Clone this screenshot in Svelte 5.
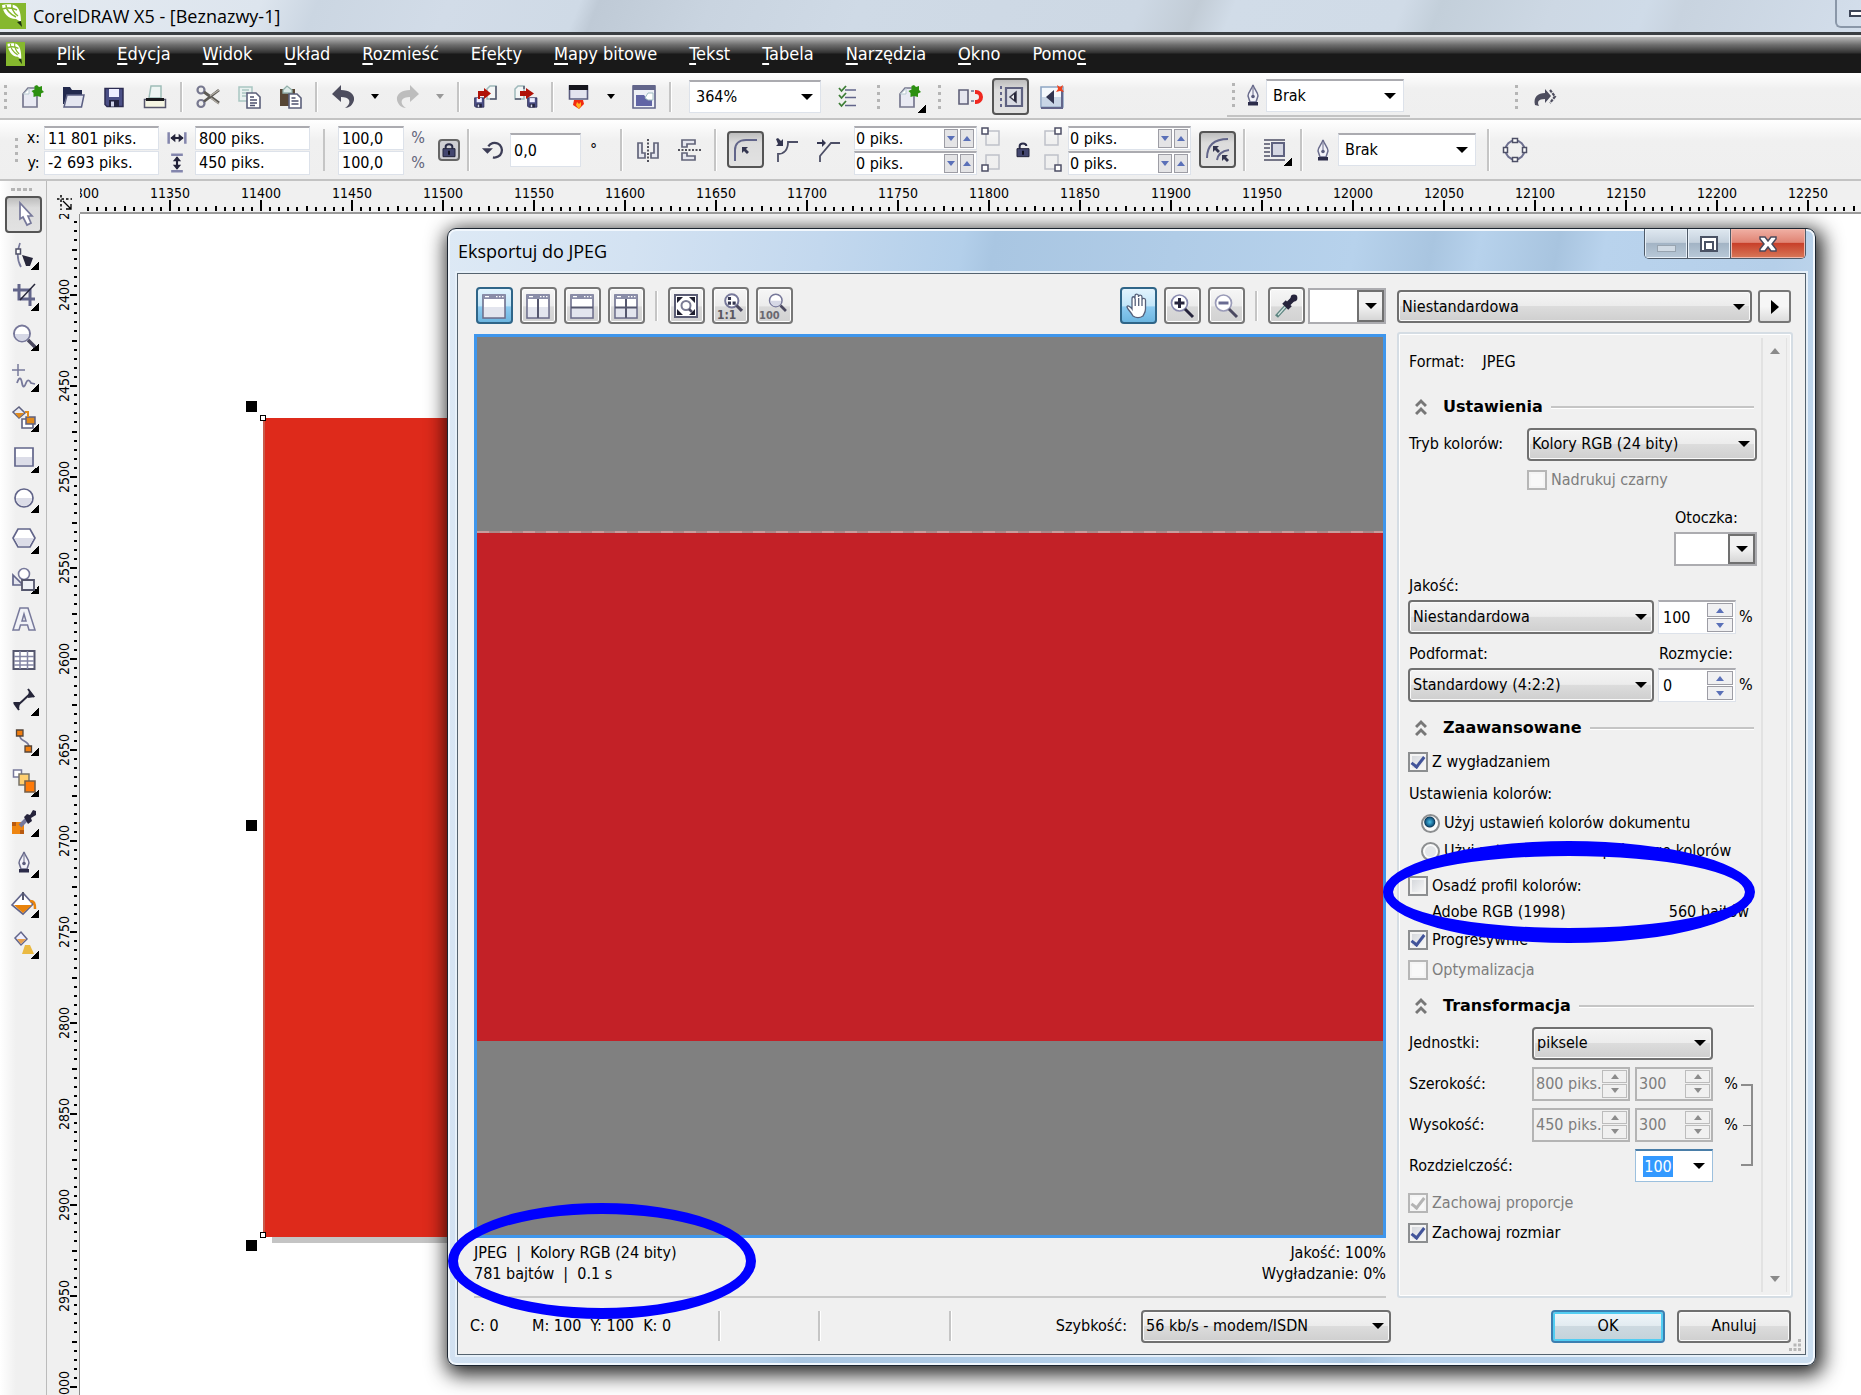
<script>
  const menu = [
    ['', 'P', 'lik'], ['', 'E', 'dycja'], ['', 'W', 'idok'], ['', 'U', 'kład'],
    ['', 'R', 'ozmieść'], ['Efe', 'k', 'ty'], ['', 'M', 'apy bitowe'], ['', 'T', 'ekst'],
    ['', 'T', 'abela'], ['', 'N', 'arzędzia'], ['', 'O', 'kno'], ['Pomo', 'c', '']
  ];

  const floppy = '<path fill="#4b4f86" stroke="#2c2c52" stroke-width="1.5" d="M3 3.5h18v18H5l-2-2z"/><path fill="#eef" d="M7 4h10v8H7z"/><path fill="#23233f" d="M7 15h10v7H7z"/><path fill="#cfd3ea" d="M9 16.500h3v5H9z"/>';
  const nib = '<path fill="#f2f2f8" stroke="#6a6c8c" stroke-width="1.5" d="M12 2c-1 4-5 7-5 11l2 6h6l2-6c0-4-4-7-5-11z"/><path stroke="#6a6c8c" d="M12 5v8"/><circle cx="12" cy="13.500" r="1.800" fill="#5a5c7c"/><path fill="#2c2c4a" d="M7 19h10v3.500H7z"/>';
  const lens = '<circle cx="10" cy="9.500" r="8" fill="#fff" stroke="#77789a" stroke-width="2"/><path fill="#d6d8e6" d="M3 10h14a7 7 0 0 1-14 0z"/><path stroke="#4b4960" stroke-width="3.500" d="M16 16l7 7"/>';
  const win = '<rect x="1" y="1" width="22" height="23" fill="#fff" stroke="#6d6f8d" stroke-width="1.600"/><path fill="#e3e5ee" d="M2 13h20v10H2z"/><path fill="#8a8da8" d="M1 0h22v5H1z"/><path stroke="#fff" stroke-width="1.200" d="M3 2.600h4M14 2.600h1.500M17 2.600h1.500M20 2.600h1.500"/>';
  const dropper = '<path stroke="#5d8580" stroke-width="4" d="M2.500 22.500L13 11"/><path stroke="#d5e6e2" stroke-width="1.200" d="M4 21L12 12"/><path stroke="#26243c" stroke-width="5" d="M10 8l6 6M14 10l6-6"/><circle cx="20" cy="4" r="3.400" fill="#26243c"/>';

  const icons = {
    new: '<path fill="#e9eaf3" stroke="#77788f" stroke-width="1.700" d="M3 9l5-6h9v19H3z"/><path fill="#fff" stroke="#b7c9d0" d="M3.500 9H9V3.500z"/><path fill="#2c9010" d="M17 0l2 2 3-1v4l2 2-3 1.500V12l-4-1-3.500 1V8l-2-2 3-1.500V1z"/>',
    open: '<path fill="#22294d" d="M2 2h7l2 3h10v6H6L3 19H2z"/><path fill="#e4e6f0" stroke="#5b5f82" stroke-width="1.500" d="M6 10h17l-2.500 12H3z"/>',
    save: floppy,
    print: '<path fill="#eef5f3" stroke="#9fbdb8" stroke-width="1.500" d="M8 1h10v12H6z"/><path fill="#f4f4e2" stroke="#55556b" stroke-width="1.500" d="M1.500 14.500h21v8h-21z"/><path fill="#18181c" d="M3 13h18v3H3z"/>',
    cut: '<circle cx="5" cy="5" r="3.500" fill="none" stroke="#77788f" stroke-width="2.200"/><circle cx="5" cy="18.500" r="3.500" fill="none" stroke="#77788f" stroke-width="2.200"/><path stroke="#5c5a55" stroke-width="2.800" d="M8 7l15 11M8 16.500L23 5"/><path stroke="#b5b0a8" stroke-width="1.200" d="M14 11l9-6M15 13l8 6"/>',
    copy: '<path fill="#e8f1ef" stroke="#a9c6c2" stroke-width="1.500" d="M2 2h13v14H2z"/><path stroke="#a9c6c2" stroke-width="1.500" d="M5 5h7M5 8h6M5 11h4"/><path fill="#fff" stroke="#5b5f7a" stroke-width="1.600" d="M10 8h9l4 4v11H10z"/><path stroke="#4c506e" stroke-width="1.500" d="M13 12h4M13 15h7M13 18h7M13 20.500h5"/>',
    paste: '<path fill="#574634" d="M2 4h15v17H2z"/><path fill="#dceae7" stroke="#93b0aa" stroke-width="1.300" d="M5 5l4-4 5 4v3H5z"/><path fill="#fff" stroke="#5b5f7a" stroke-width="1.600" d="M11 9h8l4 4v10H11z"/><path stroke="#4c506e" stroke-width="1.500" d="M13.500 13h4M13.500 16h7M13.500 19h7"/>',
    undo: '<path fill="#4d4d5e" d="M1 9L10 0v5c8 0 14 4 13 10-1 5-5 8-9 8 4-3 5-5 4-8-1-2-4-3-8-3v5z"/>',
    redo: '<path fill="#bdbdbd" d="M23 9L14 0v5C6 5 0 9 1 15c1 5 5 8 9 8-4-3-5-5-4-8 1-2 4-3 8-3v5z"/>',
    import: '<path fill="#f4f6f6" stroke="#9eb9bb" stroke-width="1.500" d="M14 4l3-3h6v13h-9z"/><path stroke="#55576e" stroke-width="1.500" d="M23 1v13h-6"/><g transform="translate(0 11) scale(.52)">' + floppy + '</g><path fill="#b01208" d="M5 6h6V3l7 5.500-7 5.500v-3H7v3H5z"/>',
    export: '<path fill="#f4f6f6" stroke="#9eb9bb" stroke-width="1.500" d="M1 4l3-3h6v13H1z"/><path stroke="#55576e" stroke-width="1.500" d="M10 1v3M1 14h6"/><g transform="translate(12 11) scale(.52)">' + floppy + '</g><path fill="#b01208" d="M6 6h6V3l8 5.500-8 5.500v-3H6z"/>',
    launch: '<path fill="#e3e4ef" stroke="#5b5d80" stroke-width="1.600" d="M2.500 1h18v13h-18z"/><path fill="#15151c" d="M2 0h19v5H2z"/><path fill="#f02a10" d="M7 15h9l1 4-5 5-6-4z"/><path fill="#ffb020" d="M10 17l2 2 2-2v4l-2.500 3L9 20z"/>',
    welcome: '<path fill="#eef0f6" stroke="#62658a" stroke-width="1.600" d="M1 1h22v22H1z"/><path fill="#62658a" d="M1 0h22v5H1z"/><path fill="#6165a5" d="M4 10h8l3 4h5v7H4z"/><path fill="#fff" stroke="#a0bcc2" d="M13 13l3-5h5v7h-5z"/>',
    list: '<path stroke="#62658a" stroke-width="1.600" d="M9 5h11M9 12.500h11M9 20.500h11"/><path fill="none" stroke="#3d7d35" stroke-width="1.800" d="M3 3l2.500 3L10 1M3 10l2.500 3L10 8M3 18l2.500 3L10 16"/>',
    snap: '<path fill="#e6e7f0" stroke="#5f6078" stroke-width="1.600" d="M1 5h9v14H1z"/><path fill="none" stroke="#f02820" stroke-width="4" d="M17 7h1a5 5 0 0 1 0 10h-1"/><path stroke="#8b93a8" stroke-width="3" stroke-dasharray="2" d="M14.500 5v4M14.500 15v4"/>',
    dockon: '<path stroke="#62658a" stroke-width="2" stroke-dasharray="3 3" d="M2 1v22"/><path fill="#d9dbe3" stroke="#5f6280" stroke-width="2.200" d="M7 3h16v18H7z"/><path fill="#e8e8ec" stroke="#38384a" stroke-width="1.500" d="M17 7v10l-6-5z"/><path fill="#26263a" d="M15 8h2v8h-2z"/>',
    dockoff: '<path fill="#f4f8fc" stroke="#8fa6c4" stroke-width="1.600" d="M1 2h22v20H1z"/><path fill="#c9d6e6" d="M2 12h20v9H2z"/><path stroke="#62658a" stroke-width="2" d="M22 6v17H1"/><path fill="#31344f" d="M14 5v14L6 12z"/><path fill="#f0421c" d="M17 0l3 2 3-2-1 4 2 3-4-1-4 1 2-3z"/>',
    nib,
    fwd: '<path fill="#4d4d5e" d="M13 4v4C6 8 1 12 3 20l4 1c-2-4-1-7 6-7v4l6-7z"/><path fill="none" stroke="#4d4d5e" stroke-width="2.200" stroke-dasharray="3 1" d="M18 5l5 6.500-5 6.500"/>',
    width: '<path stroke="#8486ad" stroke-width="3" d="M2 5v14M22 5v14"/><path stroke="#23233a" stroke-width="2.500" d="M5 12h14"/><path fill="#23233a" d="M4 12l6-5v10zM20 12l-6-5v10z"/>',
    height: '<path stroke="#8486ad" stroke-width="3" d="M5 2h14M5 22h14"/><path stroke="#23233a" stroke-width="2.500" d="M12 5v14"/><path fill="#23233a" d="M12 4l5 6H7zM12 20l5-6H7z"/>',
    lock: '<path fill="none" stroke="#2a2c48" stroke-width="3" d="M7 11V7c0-5 10-5 10 0v4"/><path fill="#43466f" stroke="#23243c" stroke-width="1.500" d="M3 10h18v12H3z"/><path fill="#0f0f1c" d="M10.500 13h3v6h-3z"/>',
    unlock: '<path fill="none" stroke="#2a2c48" stroke-width="3" d="M7 11V6c0-5 10-5 10 0"/><path fill="#43466f" stroke="#23243c" stroke-width="1.500" d="M3 10h18v12H3z"/><path fill="#0f0f1c" d="M10.500 13h3v6h-3z"/>',
    rotate: '<path fill="none" stroke="#3c3d56" stroke-width="2.500" d="M8 8a8 8 0 1 1 5 12"/><path fill="#3c3d56" d="M1 10h12l-6 6z"/>',
    mirh: '<path stroke="#1d1d2a" stroke-width="1.500" stroke-dasharray="2 1.500" d="M12 1v23"/><path fill="#e6e7ef" stroke="#62647a" stroke-width="1.700" d="M2 5h4v10h3v5H2zM22 5h-4v10h-3v5h7z"/>',
    mirv: '<path stroke="#1d1d2a" stroke-width="1.500" stroke-dasharray="2 1.500" d="M1 12h23"/><path fill="#e6e7ef" stroke="#62647a" stroke-width="1.700" d="M5 9V2h13v4h-8v3zM5 15v7h13v-4h-8v-3z"/>',
    round: '<path fill="none" stroke="#62658a" stroke-width="2" d="M1 23V12C1 6 5 2 12 2h11"/><path fill="#33354f" d="M8 9h6l-2 2 3 3-2 2-3-3-2 2z"/>',
    scallop: '<path fill="none" stroke="#4d4f66" stroke-width="1.800" d="M3 24v-8c6 0 10-4 10-12h10"/><path fill="#33354f" d="M1 1l2-1 3 3 2-2v7H1l2-2z"/>',
    chamfer: '<path fill="none" stroke="#4d4f66" stroke-width="1.800" d="M4 24v-6L15 5h9"/><path fill="#33354f" d="M1 4h5V1l4 4-4 4V6H1z"/>',
    rel: '<path fill="none" stroke="#62658a" stroke-width="2" d="M1 20C1 8 7 1 22 1M11 22c1-6 5-9 12-10"/><path fill="#33354f" d="M7 8h6l-2 2 3 3-2 2-3-3-2 2zM16 17h6l-2 2 3 3-2 2-3-3-2 2z"/>',
    wrap: '<path stroke="#4d4f66" stroke-width="1.700" d="M1 2h21M1 6h6M1 10h6M1 14h6M1 18h6M1 22h21"/><path fill="#d5d7e3" stroke="#5f6280" stroke-width="2" d="M9 5h12v13H9z"/>',
    curve: '<circle cx="12" cy="12" r="9.500" fill="none" stroke="#6e7090" stroke-width="2"/><g fill="#fff" stroke="#4d4f66" stroke-width="1.500"><path d="M9.500.500h5v4h-5zM9.500 19.500h5v4h-5zM.500 9.500h4v5h-4zM19.500 9.500h4v5h-4z"/></g>',
    pick: '<path fill="#fff" stroke="#77799b" stroke-width="1.700" d="M8 1v16l3-2 4 8 4-2-3-7h4z"/>',
    shape: '<path fill="none" stroke="#77799b" stroke-width="1.700" d="M8 0C5 8 5 17 9 24"/><path fill="#fff" stroke="#4d4f66" stroke-width="1.500" d="M4 6h4.500v5H4z"/><path fill="#26263a" d="M10 12l11 3-3 8h-4z"/>',
    crop: '<path fill="none" stroke="#62658a" stroke-width="3" d="M1 7h17v16M7 1v15h16"/><path stroke="#26263a" stroke-width="1.500" d="M8 17L23 1"/>',
    zoom: lens,
    free: '<path stroke="#77799b" stroke-width="1.500" d="M0 6h13M6 0v12"/><path fill="none" stroke="#77799b" stroke-width="1.800" d="M5 19c2-6 4-6 5 0s3 3 4 0 3-4 5 0l4 1"/>',
    smart: '<path fill="#e9eaf2" stroke="#5f6280" stroke-width="1.500" d="M1 7l6-5 6 6-6 5z"/><path fill="#e08a1c" d="M3 8h9l-5 5z"/><path fill="#fff" stroke="#5f6280" stroke-width="1.600" d="M10 14h11v9H10z"/><path fill="#e08a1c" stroke="#5f6280" stroke-width="1.500" d="M14 12h9v7h-9z"/><path stroke="#e08a1c" stroke-width="2" d="M13 7h3v5"/>',
    rect: '<path fill="#fff" stroke="#62658a" stroke-width="1.700" d="M3 3h18v18H3z"/><path fill="#dcdde8" d="M4 12h16v8H4z"/>',
    ell: '<circle cx="12" cy="12" r="9" fill="#fff" stroke="#62658a" stroke-width="1.700"/><path fill="#dcdde8" d="M4 12h16a8 8 0 0 1-16 0z"/>',
    poly: '<path fill="#fff" stroke="#62658a" stroke-width="1.700" d="M6 3h12l5 9-5 9H6l-5-9z"/><path fill="#dcdde8" d="M2 12h20l-5 8H7z"/>',
    shapes: '<path fill="#e4e5ee" stroke="#62658a" stroke-width="1.700" d="M1 8l10 10H1z"/><circle cx="12" cy="7" r="5.500" fill="#fff" stroke="#77799b" stroke-width="1.600"/><path fill="#eef0f6" stroke="#55576e" stroke-width="1.800" d="M10 13h12v10H10z"/>',
    text: '<path fill="#f1f2f7" stroke="#77799b" stroke-width="1.500" fill-rule="evenodd" d="M8 1h8l7 22h-6l-1.500-5h-7L7 23H1zM12 7l-2 7h4z"/>',
    table: '<path fill="#fff" stroke="#55576e" stroke-width="2" d="M1.500 3h21v18h-21z"/><path stroke="#8486a5" stroke-width="1.500" d="M8 3v18M15.500 3v18M2 8.500h20M2 13h20M2 17h20"/>',
    dim: '<path stroke="#26263a" stroke-width="2" d="M5 18L19 5"/><path fill="#26263a" d="M1 14l6 7 1-7zM23 9l-6-7-1 8z"/><path stroke="#26263a" stroke-width="2" d="M2 15l5 7M16 1l6 8"/>',
    conn: '<path fill="none" stroke="#77799b" stroke-width="1.700" d="M8 7c0 6 9 4 9 11"/><path fill="#ef7d10" stroke="#55453a" stroke-width="1.300" d="M4.500 1h6.500v6H4.500zM13 17h6.500v6H13z"/>',
    blend: '<path fill="#fff" stroke="#77799b" stroke-width="1.500" d="M1.500 1h8v7h-8z"/><path fill="#ffcf70" stroke="#77736a" stroke-width="1.500" d="M7 5h10v11H7z"/><path fill="#ff7a08" stroke="#77604a" stroke-width="1.600" d="M13 12h10v11H13z"/>',
    eye: '<path fill="#ee8510" d="M0 12h12v12H0z"/><path fill="#b85a10" d="M0 12h4v4H0zM8 20h4v4H8z"/><path stroke="#77799b" stroke-width="4" d="M8 16l8-8"/><path fill="#26243c" d="M12 7l3-3 3 1 3-5 3 1v4l-5 3 1 3-4 3z"/>',
    fill: '<path fill="#fff" stroke="#62658a" stroke-width="1.700" d="M0 14L11 2l10 11-10 10z"/><path fill="#e8830c" d="M2 14h18l-9 8z"/><path stroke="#55576e" stroke-width="2" d="M11 1v8"/><path fill="none" stroke="#e8830c" stroke-width="2.500" d="M18 10c4 0 5 2 5 8"/>',
    ifill: '<path fill="#eef" stroke="#62658a" stroke-width="1.500" d="M3 7l6-6 6 7-6 6z"/><path fill="#e8a04c" d="M5 8h9l-5 5z"/><path fill="#eab942" d="M13 14h5l4 9H10z"/>',
    w1: win,
    w2: win + '<path stroke="#55576e" stroke-width="2" d="M12 5v19"/>',
    w3: win + '<path stroke="#55576e" stroke-width="2" d="M1 13.500h22"/>',
    w4: win + '<path stroke="#55576e" stroke-width="2" d="M12 5v19M1 13.500h22"/>',
    fit: '<path fill="#fff" stroke="#5a5c74" stroke-width="2" d="M1 1h22v22H1z"/><path fill="#1f1f30" d="M3 3h6L3 9zM21 3h-6l6 6zM3 21h6l-6-6zM21 21h-6l6-6z"/><circle cx="12" cy="11.500" r="4.500" fill="#fff" stroke="#7a7c94" stroke-width="2"/><path stroke="#4b4960" stroke-width="2.500" d="M15 15l3 3"/>',
    one: '<g transform="translate(6 -1) scale(.78)"><circle cx="10" cy="10" r="8.500" fill="#fff" stroke="#77789a" stroke-width="2.500"/><path stroke="#4b4960" stroke-width="4" d="M16 16l7 7"/><path fill="#33354f" d="M5 5h4v4H5zM11 11h4v4h-4zM5 11h4v4H5z"/></g><text x="-1" y="25" font-size="12" font-weight="700" fill="#5a5860">1:1</text>',
    hund: '<g transform="translate(6 -1) scale(.78)">' + lens + '</g><text x="-3" y="25" font-size="11" font-weight="700" fill="#6a6870">100</text>',
    hand: '<path fill="#fff" stroke="#55607a" stroke-width="1.300" d="M7 22c-2-4-5-6-6-9 0-2 3-1 5 2V5c0-3 3-3 3 0V2c0-2.500 3.500-2.500 3.500 0v1c0-2.500 3.500-2.500 3.500 0v3c0-2.500 3.500-2 3.500 0v9c0 4-2 5-2.500 7-3 2-7 2-10 0z"/><path stroke="#55607a" stroke-width="1.300" d="M9.200 5v7M12.700 4v8M16 6v6"/>',
    zin: '<circle cx="9.500" cy="9" r="8" fill="#fff" stroke="#8a8bb0" stroke-width="1.700"/><path stroke="#26243c" stroke-width="3" d="M4.500 9h10M9.500 4v10M15 15l8 8"/>',
    zout: '<circle cx="9.500" cy="9" r="8" fill="#fff" stroke="#9a9bb8" stroke-width="1.700"/><path stroke="#6a6c92" stroke-width="3" d="M4.500 9h10"/><path stroke="#4b4960" stroke-width="3" d="M15 15l8 8"/>',
    dropper
  };

  const tools = [
    ['pick', 'Wskaźnik', 0], ['shape', 'Kształt', 1], ['crop', 'Kadrowanie', 1], ['zoom', 'Lupa', 1],
    ['free', 'Krzywa od ręki', 1], ['smart', 'Inteligentne wypełnienie', 1], ['rect', 'Prostokąt', 1],
    ['ell', 'Elipsa', 1], ['poly', 'Wielokąt', 1], ['shapes', 'Kształty podstawowe', 1], ['text', 'Tekst', 0],
    ['table', 'Tabela', 0], ['dim', 'Wymiar', 1], ['conn', 'Łącznik', 1], ['blend', 'Metamorfoza', 1],
    ['eye', 'Kroplomierz', 1], ['nib', 'Kontur', 1], ['fill', 'Wypełnienie', 1], ['ifill', 'Wypełnienie interakcyjne', 1]
  ];

  const step = 91;
  const hMarks = Array.from({ length: 21 }, (_, i) => ({ at: i * step - 1, label: 11300 + i * 50 }));
  const vMarks = Array.from({ length: 14 }, (_, i) => ({ at: (i - 1) * step + 81, label: 2350 + i * 50 }));
  const minor = [1, 2, 3, 4, 5, 6, 7, 8, 9];
</script>

{#snippet icon(name, size = 24)}
  <svg class="ico" width={size} height={size} viewBox="0 0 24 24" fill="none" aria-hidden="true">{@html icons[name]}</svg>
{/snippet}

{#snippet tool(name, label, cls = '')}
  <button type="button" class="tb {cls}" aria-label={label}><span class="face">{@render icon(name)}</span></button>
{/snippet}

{#snippet logo()}
  <svg class="logo" viewBox="0 0 26 26" preserveAspectRatio="none" aria-hidden="true">
    <path fill="#86b82e" d="M0 0h26v26H0z" />
    <path fill="#fff" d="M2 2c5-1 11-1 14 1 4 3 5 9 5 16l-5-3c-8 0-13-6-14-14z" />
    <path stroke="#86b82e" stroke-width="1.500" fill="none" d="M6 2c0 5 4 9 10 12M12 1c-1 5 2 9 6 12M2 6c4-1 9-2 15 1" />
    <path fill="#1c3010" d="M17 19l4-1 1 6z" />
  </svg>
{/snippet}

{#snippet sel(label, value, cls = '')}
  <span class="sel {cls}"><select aria-label={label}><option>{value}</option></select></span>
{/snippet}

{#snippet spin(label, value, cls = '', disabled = false)}
  <span class="spin {cls}" class:off={disabled}>
    <input type="text" aria-label={label} {value} {disabled} />
    <span class="arrows">
      <button type="button" class="up" aria-label="{label}: więcej" {disabled}></button>
      <button type="button" class="down" aria-label="{label}: mniej" {disabled}></button>
    </span>
  </span>
{/snippet}

{#snippet heading(title)}
  <h2>
    <svg width="12" height="18" viewBox="0 0 12 18" fill="none" aria-hidden="true"><path stroke="#777" stroke-width="3" d="M1 8l5-5 5 5M1 16l5-5 5 5" /></svg>
    <span>{title}</span>
  </h2>
{/snippet}

<div class="app">
  <header class="title">
    {@render logo()}
    <h1>CorelDRAW X5 - [Beznazwy-1]</h1>
    <button type="button" class="appmin" aria-label="Minimalizuj"><i></i></button>
  </header>

  <nav class="menu">
    {@render logo()}
    {#each menu as [a, u, b]}
      <a href="#menu">{a}<u>{u}</u>{b}</a>
    {/each}
  </nav>

  <div class="bar main">
    <div class="dock">
      <i class="grip first"></i>
      {@render tool('new', 'Nowy')}{@render tool('open', 'Otwórz')}{@render tool('save', 'Zapisz')}{@render tool('print', 'Drukuj')}
      <i class="sep"></i>
      {@render tool('cut', 'Wytnij')}{@render tool('copy', 'Kopiuj')}{@render tool('paste', 'Wklej')}
      <i class="sep"></i>
      {@render tool('undo', 'Cofnij')}<button type="button" class="more" aria-label="Lista cofania"></button>
      {@render tool('redo', 'Ponów')}<button type="button" class="more dim" aria-label="Lista ponawiania"></button>
      <i class="sep"></i>
      {@render tool('import', 'Importuj')}{@render tool('export', 'Eksportuj')}
      <i class="sep"></i>
      {@render tool('launch', 'Uruchamianie aplikacji')}<button type="button" class="more" aria-label="Lista aplikacji"></button>
      {@render tool('welcome', 'Ekran powitalny')}
      <i class="sep"></i>
      {@render sel('Powiększenie', '364%', 'flat zoomsel')}
      {@render tool('list', 'Opcje', 'gaps')}
      <i class="grip"></i>
      {@render tool('new', 'Nowy dokument', 'fly')}
      <i class="grip"></i>
      {@render tool('snap', 'Przyciągaj')}{@render tool('dockon', 'Okna dokowane', 'on')}{@render tool('dockoff', 'Zamknij okna')}
    </div>
    <div class="dock pen">
      <i class="grip first"></i>
      <span class="cell w26">{@render icon('nib')}</span>
      {@render sel('Kontur', 'Brak', 'flat pensel')}
    </div>
    <div class="dock">
      <i class="grip first"></i>
      {@render tool('fwd', 'Dalej')}
    </div>
  </div>

  <div class="bar prop">
    <i class="grip first"></i>
    <div class="stack labels"><label for="px">x:</label><label for="py">y:</label></div>
    <div class="stack w115"><input id="px" type="text" value="11 801 piks." /><input id="py" type="text" value="-2 693 piks." /></div>
    <div class="stack icons w36">{@render icon('width', 20)}{@render icon('height', 20)}</div>
    <div class="stack w115"><input aria-label="Szerokość obiektu" type="text" value="800 piks." /><input aria-label="Wysokość obiektu" type="text" value="450 piks." /></div>
    <i class="sep wide"></i>
    <div class="stack w66"><input aria-label="Skala X" type="text" value="100,0" /><input aria-label="Skala Y" type="text" value="100,0" /></div>
    <div class="stack labels pct"><span>%</span><span>%</span></div>
    <button type="button" class="lock" aria-label="Blokada proporcji">{@render icon('lock', 16)}</button>
    <i class="sep"></i>
    <span class="cell w36">{@render icon('rotate', 22)}</span>
    <input class="angle" aria-label="Kąt obrotu" type="text" value="0,0" />
    <span class="deg">°</span>
    <i class="sep"></i>
    {@render tool('mirh', 'Odbicie poziome')}{@render tool('mirv', 'Odbicie pionowe')}
    <i class="sep"></i>
    {@render tool('round', 'Zaokrąglony narożnik', 'on gap2')}{@render tool('scallop', 'Wklęsły narożnik')}{@render tool('chamfer', 'Ścięty narożnik')}
    <div class="stack w123 gaps">{@render spin('Narożnik lewy górny', '0 piks.', 'side')}{@render spin('Narożnik lewy dolny', '0 piks.', 'side')}</div>
    <svg class="corners" width="30" height="48" viewBox="0 0 30 48" fill="none" aria-hidden="true">
      <path stroke="#bfc1c9" stroke-width="1.500" d="M9 5h13v14H9zM9 29h13v14H9z" /><path fill="#fff" stroke="#4d4f66" stroke-width="1.500" d="M5 2h6v6H5zM5 39h6v6H5z" />
    </svg>
    <span class="cell w31">{@render icon('unlock', 16)}</span>
    <svg class="corners" width="30" height="48" viewBox="0 0 30 48" fill="none" aria-hidden="true">
      <path stroke="#bfc1c9" stroke-width="1.500" d="M7 5h13v14H7zM7 29h13v14H7z" /><path fill="#fff" stroke="#4d4f66" stroke-width="1.500" d="M17 2h6v6h-6zM17 39h6v6h-6z" />
    </svg>
    <div class="stack w123">{@render spin('Narożnik prawy górny', '0 piks.', 'side')}{@render spin('Narożnik prawy dolny', '0 piks.', 'side')}</div>
    {@render tool('rel', 'Względne skalowanie', 'on gaps')}
    <i class="sep"></i>
    {@render tool('wrap', 'Oblewanie tekstem', 'fly gap2')}
    <i class="sep"></i>
    <span class="cell w31">{@render icon('nib')}</span>
    {@render sel('Grubość konturu', 'Brak', 'flat pensel')}
    <i class="sep gaps"></i>
    {@render tool('curve', 'Konwertuj na krzywe')}
  </div>

  <div class="work">
    <aside class="tools">
      <i class="hgrip"></i>
      {#each tools as [name, label, fly], i}
        {@render tool(name, label, (fly ? 'fly ' : '') + (i === 0 ? 'on' : ''))}
      {/each}
    </aside>

    <div class="origin">
      <svg width="15" height="15" viewBox="0 0 15 15" fill="none" aria-hidden="true"><path stroke="#000" stroke-width="1.500" stroke-dasharray="2.500 2" d="M0 4h15M4 0v15" /><path stroke="#000" stroke-width="1.300" d="M6 6l8 8M14 9v5H9" /></svg>
    </div>
    <svg class="hruler" aria-hidden="true">
      {#each hMarks as m}
        <text x={m.at} y="17" text-anchor="middle">{m.label}</text>
        <path d="M{m.at} 19v11" />
        {#each minor as k}<path d="M{Math.round(m.at + k * step / 10)} {k === 5 ? 25 : 26}v{k === 5 ? 5 : 4}" />{/each}
      {/each}
    </svg>
    <svg class="vruler" aria-hidden="true">
      {#each vMarks as m}
        <text transform="rotate(-90 21 {m.at})" x="21" y={m.at + 1} text-anchor="middle">{m.label}</text>
        <path d="M23 {m.at}h7" />
        {#each minor as k}<path d="M{k === 5 ? 25 : 27} {Math.round(m.at + k * step / 10)}h{k === 5 ? 5 : 3}" />{/each}
      {/each}
    </svg>

    <main class="canvas">
      <div class="obj"></div>
      <i class="handle h1"></i><i class="handle h2"></i><i class="handle h3"></i>
      <i class="node n1"></i><i class="node n2"></i>

      <section class="dialog" role="dialog" aria-label="Eksportuj do JPEG">
        <header>
          <h1>Eksportuj do JPEG</h1>
          <div class="winbtns">
            <button type="button" aria-label="Minimalizuj" disabled><i class="min"></i></button>
            <button type="button" aria-label="Maksymalizuj"><i class="max"></i></button>
            <button type="button" class="close" aria-label="Zamknij"><svg width="18" height="16" viewBox="0 0 18 16" aria-hidden="true"><path fill="#fff" stroke="#4a4a5c" stroke-width="1.500" d="M1 1h5l3 4 3-4h5v2l-4 5 4 5v2h-5l-3-4-3 4H1v-2l4-5-4-5z" /></svg></button>
          </div>
        </header>

        <div class="client">
          <div class="strip">
            {@render tool('w1', 'Pełny podgląd', 'raised lit')}{@render tool('w2', 'Dwa podglądy w pionie', 'raised')}{@render tool('w3', 'Dwa podglądy w poziomie', 'raised')}{@render tool('w4', 'Cztery podglądy', 'raised')}
            <i class="sep"></i>
            {@render tool('fit', 'Dopasuj', 'raised')}{@render tool('one', 'Powiększenie 1:1', 'raised')}{@render tool('hund', 'Powiększenie 100%', 'raised')}
            <span class="grow"></span>
            {@render tool('hand', 'Przesuwanie', 'raised lit')}{@render tool('zin', 'Powiększ', 'raised')}{@render tool('zout', 'Pomniejsz', 'raised')}
            <i class="sep"></i>
            {@render tool('dropper', 'Kroplomierz', 'raised')}
            <button type="button" class="swatch" aria-label="Kolor"><i></i></button>
          </div>
          <div class="preset">
            {@render sel('Lista ustawień', 'Niestandardowa', 'grow')}
            <button type="button" class="play" aria-label="Menu ustawień"><i></i></button>
          </div>

          <div class="left">
            <div class="preview"><div class="picture"></div></div>
            <div class="status">
              <p>JPEG&nbsp; |&nbsp; Kolory RGB (24 bity)<br />781 bajtów&nbsp; |&nbsp; 0.1 s</p>
              <p class="r">Jakość: 100%<br />Wygładzanie: 0%</p>
            </div>
          </div>

          <div class="panel">
            <form class="form">
              <div class="row format"><span>Format:</span><span>JPEG</span></div>
              {@render heading('Ustawienia')}
              <div class="row h40"><span class="grow">Tryb kolorów:</span>{@render sel('Tryb kolorów', 'Kolory RGB (24 bity)', 'w230')}</div>
              <label class="row h32 black"><input type="checkbox" disabled />Nadrukuj czarny</label>
              <div class="field halo"><label for="halo">Otoczka:</label><button type="button" id="halo" class="swatch" aria-label="Kolor otoczki"><i></i></button></div>
              <div class="pairs">
                <div class="field"><span>Jakość:</span>{@render sel('Jakość', 'Niestandardowa')}</div>
                <div class="field"><span></span><div class="unit">{@render spin('Jakość w procentach', '100')}<span>%</span></div></div>
                <div class="field"><span>Podformat:</span>{@render sel('Podformat', 'Standardowy (4:2:2)')}</div>
                <div class="field"><span>Rozmycie:</span><div class="unit">{@render spin('Rozmycie', '0')}<span>%</span></div></div>
              </div>
              {@render heading('Zaawansowane')}
              <label class="row h34"><input type="checkbox" checked />Z wygładzaniem</label>
              <div class="row h30 ind2">Ustawienia kolorów:</div>
              <label class="row h28 ind"><input type="radio" name="colors" checked />Użyj ustawień kolorów dokumentu</label>
              <label class="row h28 ind"><input type="radio" name="colors" />Użyj ustawień obrazu próbnego kolorów</label>
              <label class="row h30 embed"><input type="checkbox" />Osadź profil kolorów:</label>
              <div class="row profile"><span class="grow">Adobe RGB (1998)</span><span>560 bajtów</span></div>
              <label class="row h30"><input type="checkbox" checked />Progresywnie</label>
              <label class="row h30 dis last"><input type="checkbox" disabled />Optymalizacja</label>
              {@render heading('Transformacja')}
              <div class="row h40"><span class="lab">Jednostki:</span>{@render sel('Jednostki', 'piksele', 'w181')}</div>
              <div class="sizes">
                <div class="dims">
                  <span>Szerokość:</span>{@render spin('Szerokość', '800 piks.', '', true)}{@render spin('Szerokość w procentach', '300', '', true)}<span class="end">%</span>
                  <span>Wysokość:</span>{@render spin('Wysokość', '450 piks.', '', true)}{@render spin('Wysokość w procentach', '300', '', true)}<span class="end">%</span>
                  <span class="two">Rozdzielczość:</span><span class="res"><input type="text" aria-label="Rozdzielczość" value="100" size="3" /></span>
                </div>
                <i class="bracket"></i>
              </div>
              <label class="row h30 keep dis"><input type="checkbox" checked disabled />Zachowaj proporcje</label>
              <label class="row h30"><input type="checkbox" checked />Zachowaj rozmiar</label>
            </form>
            <div class="scroll"><i class="tri up"></i><i class="tri down"></i></div>
          </div>

          <footer>
            <span class="c">C: 0</span><span class="m">M: 100&nbsp; Y: 100&nbsp; K: 0</span>
            <i class="sep"></i><span class="f1"></span><i class="sep"></i><span class="f2"></span><i class="sep"></i>
            <span class="grow"></span>
            <label for="speed">Szybkość:</label>
            <span class="sel w250"><select id="speed"><option>56 kb/s - modem/ISDN</option></select></span>
            <div class="actions"><button type="button" class="push ok">OK</button><button type="button" class="push">Anuluj</button></div>
            <svg class="size" width="12" height="12" viewBox="0 0 12 12" aria-hidden="true"><path fill="#b8b8b8" d="M9 0h3v3H9zM4.500 4.500h3v3h-3zM9 4.500h3v3H9zM0 9h3v3H0zM4.500 9h3v3h-3zM9 9h3v3H9z" /></svg>
          </footer>
        </div>
        <svg class="ring ring1" viewBox="0 0 308 116" preserveAspectRatio="none" aria-hidden="true"><path fill="#00f" fill-rule="evenodd" d="M0 58a154 58 0 0 1 308 0a154 58 0 0 1-308 0zM10 58a144 47 0 0 0 288 0a144 47 0 0 0-288 0z" /></svg>
        <svg class="ring ring2" viewBox="0 0 373 103" preserveAspectRatio="none" aria-hidden="true"><path fill="#00f" fill-rule="evenodd" d="M0 51a186 51 0 0 1 372 0a186 51 0 0 1-372 0zM10 51a176 36 0 0 0 352 0a176 36 0 0 0-352 0z" /></svg>
      </section>
    </main>
  </div>
</div>

<style>
  :global(body) { margin: 0; }
  * { box-sizing: border-box; }
  .app { height: 100vh; display: flex; flex-direction: column; overflow: hidden; background: #fff; color: #000; font: 16px/20px "DejaVu Sans Condensed", "Noto Sans", sans-serif; }
  button, input, select { font: inherit; color: inherit; margin: 0; padding: 0; border: 0; background: none; border-radius: 0; outline: 0; min-width: 0; }
  h1, h2, p { margin: 0; font-weight: 400; }
  i { display: block; font-style: normal; flex: none; }
  svg { display: block; flex: none; }
  .ico { overflow: visible; }
  .grow { flex: 1; }

  .title { height: 35px; flex: none; display: flex; align-items: center; gap: 7px; border-bottom: 3px solid #3a3e42; background: linear-gradient(112deg, #e4eaf1 0, #dde5ee 14%, #cbd6e2 17%, #d2dce8 24%, #cfdae6 31%, #bfcad6 32%, #c9d4e0 38%, #cfdae6 46%, #cdd8e4 61%, #c2ccd6 64%, #d1dce8 66%, #d0dbe7 75%, #c3cfda 77%, #cdd8e4 83%, #cfdbe8 88%, #c8d3df 90%, #d3deeb 100%); }
  .title h1, .dialog h1 { font: 18px/24px "Open Sans", "Noto Sans", sans-serif; flex: 1; }
  .logo { width: 26px; height: 26px; }
  .appmin { align-self: flex-start; width: 26px; height: 28px; border: 2px solid #8a97a8; border-width: 0 0 2px 2px; border-bottom-left-radius: 6px; display: grid; place-items: center end; }
  .appmin i { width: 12px; height: 7px; border: 2px solid #3e4658; border-right: 0; background: #fff; }

  .menu { height: 38px; flex: none; display: flex; align-items: center; gap: 32px; padding: 0 6px 2px; color: #fff; font-size: 18px; line-height: 24px; border-top: 2px solid #e8e8e8; background: linear-gradient(#b8b8b8, #9c9c9c 3px, #6c6c6c 8px, #484848 13px, #303030 16px, #191919 17px); }
  .menu .logo { width: 19px; height: 24px; }
  .menu a { color: #fff; text-decoration: none; white-space: nowrap; }
  .menu u { text-underline-offset: 3px; text-decoration-thickness: 2px; }

  .bar { flex: none; display: flex; align-items: center; background: linear-gradient(#fff, #f0f0f0 35%, #efefef); border-bottom: 2px solid #c3c3c3; }
  .main { height: 47px; display: grid; grid-template-columns: 1227fr 283fr 351fr; align-items: stretch; }
  .dock { display: flex; align-items: center; min-width: 0; padding-top: 2px; }
  .pen { justify-self: start; align-self: start; height: 44px; border-bottom: 2px solid #c3c3c3; padding-right: 6px; }
  .prop { height: 61px; padding-left: 10px; }
  .grip { width: 20px; height: 28px; background: radial-gradient(circle at 50% 50%, #b5b5b5 0 2px, transparent 2px) center top / 5px 7px repeat-y; }
  .grip.first { width: 13px; }
  .main .dock:first-child > .first { width: 11px; }
  .sep { width: 12px; height: 30px; background: linear-gradient(90deg, transparent 5px, #c5c5c5 5px 7px, #fff 7px 8px, transparent 8px); }
  .prop .sep { height: 42px; }
  .sep.wide { width: 28px; background: linear-gradient(90deg, transparent 13px, #c5c5c5 13px 15px, transparent 15px); }
  .tb { width: 41px; height: 37px; flex: none; display: flex; justify-content: center; align-items: center; }
  .face { width: 37px; height: 37px; display: flex; justify-content: center; align-items: center; border-radius: 4px; }
  .on .face { border: 2px solid #555; background: linear-gradient(#bdbdbd, #dcdcdc 30%, #e2e2e2); }
  .fly .face { background: linear-gradient(135deg, transparent 50%, #000 50%) right 1px bottom 2px / 8px 8px no-repeat; }
  .more { width: 24px; height: 30px; flex: none; display: grid; place-items: center; }
  .more::after { content: ""; border: 4px solid transparent; border-top: 5px solid #000; border-bottom: 0; }
  .more.dim::after { border-top-color: #999; }
  .gaps { margin-left: 6px; }
  .gap2 { margin-left: 4px; }
  .cell { display: grid; place-items: center; flex: none; }
  .w26 { width: 26px; }
  .w31 { width: 31px; }
  .w36 { width: 36px; }
  .stack { flex: none; display: grid; grid-auto-rows: 24px; row-gap: 1px; align-items: stretch; padding-top: 2px; }
  .stack input, .angle { border: 1px solid #dde2ea; border-top: 2px solid #ababb0; background: #fff; width: 100%; padding-left: 3px; }
  .stack > input:last-child { border-top: 1px solid #dde2ea; }
  .labels { width: 21px; text-align: center; line-height: 24px; }
  .pct { width: 28px; color: #62647a; }
  .icons { justify-items: center; align-items: center; }
  .w115 { width: 115px; }
  .w66 { width: 66px; }
  .w123 { width: 123px; }
  .lock { width: 22px; height: 22px; margin: 0 2px 0 6px; border: 2px solid #666; border-radius: 4px; background: #cfcfd3; display: grid; place-items: center; flex: none; }
  .angle { width: 71px; height: 34px; flex: none; }
  .deg { width: 34px; padding-left: 9px; flex: none; }

  .sel { display: grid; height: 33px; align-items: center; flex: none; border: 2px solid #707070; border-radius: 4px; background: linear-gradient(#f4f4f4, #ececec 48%, #dcdcdc 50%, #cfcfcf); box-shadow: inset 0 0 0 1px #fafafa; }
  .sel select, .sel::after { grid-area: 1 / 1; }
  .sel select { appearance: none; width: 100%; height: 100%; padding: 0 24px 0 3px; }
  .sel::after { content: ""; justify-self: end; margin-right: 5px; border: 6px solid transparent; border-top: 6px solid #000; border-bottom: 0; pointer-events: none; }
  .sel.grow { flex: 1; }
  .sel.flat { border: 1px solid #dde2ea; border-top: 2px solid #ababb0; border-radius: 0; background: #fff; box-shadow: none; }
  .flat select { padding-left: 6px; }
  .flat::after { margin-right: 7px; }
  .zoomsel { width: 132px; margin-left: 13px; }
  .pensel { width: 138px; }
  .w230 { width: 230px; }
  .w181 { width: 181px; }
  .w250 { width: 250px; }

  .spin { display: flex; height: 34px; background: #fff; border: 1px solid #dde2ea; border-top: 2px solid #ababb0; padding: 1px 2px 1px 0; min-width: 0; }
  .spin input, .stack .spin input { flex: 1; width: 0; border: 0; background: none; padding-left: 4px; }
  .stack .spin input { padding-left: 1px; }
  .arrows { width: 26px; display: flex; flex-direction: column; gap: 1px; flex: none; }
  .arrows button { flex: 1; border: 1px solid #9d9da5; background: #f0f0f2; display: grid; place-items: center; }
  .arrows button::after { content: ""; border: 4px solid transparent; border-bottom: 5px solid #5a70b8; border-top: 0; }
  .arrows .down::after { border-top: 5px solid #5a70b8; border-bottom: 0; }
  .side { height: 24px; }
  .side .arrows { flex-direction: row-reverse; width: 30px; gap: 2px; }
  .side .arrows button { background: #e4e4e6; }
  .off { background: #f0f0f0; border: 2px solid #b4b4b4; color: #7d7d7d; padding: 1px; }
  .off input { padding-left: 1px; }
  .off .arrows { width: 25px; }
  .off .arrows button { border-color: #bcbcbc; background: #f0f0f0; }
  .off .arrows button::after { border-bottom-color: #8c8c8c; }
  .off .arrows .down::after { border-top-color: #8c8c8c; }

  .work { flex: 1; min-height: 0; display: grid; grid-template: 33px 1fr / 47px 33px 1fr; background: #f0f0f0; }
  .tools { grid-row: 1 / 3; border-right: 1px solid #bbb; background: linear-gradient(90deg, #fff, #f0f0f0 16px); padding: 6px 0 0 3px; display: flex; flex-direction: column; }
  .hgrip { height: 7px; margin: 0 14px 0 7px; background: radial-gradient(circle, #b5b5b5 0 2px, transparent 2px) left top / 6px 5px repeat-x; }
  .tools .tb { height: 41px; }
  .tools .tb:nth-of-type(odd) { height: 40px; }
  .tools .fly .face { background-position: right 3px bottom 3px; }
  .origin { display: grid; place-items: end; padding: 0 8px 4px 0; }
  .hruler { width: 100%; height: 33px; border-bottom: 2px solid #9b9b9b; }
  .vruler { width: 100%; height: 100%; border-right: 1px solid #8b8b8b; }
  .hruler text, .vruler text { font-size: 14px; fill: #000; }
  .hruler path, .vruler path { stroke: #000; stroke-width: 2; }
  .canvas { position: relative; overflow: hidden; background: #fff; min-width: 0; }
  .obj { position: absolute; left: 183px; top: 204px; height: 819px; aspect-ratio: 16 / 9; background: #de2a1b; border-left: 2px solid #c85a4a; box-shadow: 9px 6px 0 #c4c4c4; }
  .handle { position: absolute; left: 166px; width: 11px; height: 11px; background: #000; }
  .h1 { top: 187px; }
  .h2 { top: 606px; }
  .h3 { top: 1026px; }
  .node { position: absolute; left: 180px; width: 6px; height: 6px; border: 1px solid #000; background: #fff; }
  .n1 { top: 201px; }
  .n2 { top: 1018px; }

  .dialog { position: absolute; left: 367px; right: 45px; top: 14px; padding: 0 9px 10px; border: 1px solid #1c2530; border-radius: 9px; background: linear-gradient(100deg, #dde9f5 0, #d3e2f2 12%, #c3d8ee 24%, #b3cfea 33%, #a9c6e2 35%, #b7d2ec 58%, #a9c5e0 63%, #b7d2ec 66%, #a8c4df 71%, #b9d3ed 74%, #b5cfe9 85%, #cbdef0 95%); box-shadow: inset 0 0 0 2px #f1f7fd, 3px 5px 20px 4px rgba(0, 0, 0, .85); }
  .dialog > header { height: 44px; display: flex; align-items: center; padding-left: 1px; }
  .winbtns { align-self: flex-start; display: flex; border: 1px solid #4e5a68; border-top: 0; border-radius: 0 0 5px 5px; overflow: hidden; height: 30px; }
  .winbtns button { width: 43px; display: grid; place-items: center; border-right: 1px solid #4e5a68; background: linear-gradient(#dfe8f0, #c5d1dd 46%, #a3b4c5 50%, #b9c9d8); box-shadow: inset 0 0 0 1px #e8f0f8; }
  .winbtns .close { width: 74px; border: 0; background: linear-gradient(#f0b0a4, #e08474 46%, #c8402a 50%, #d87858); box-shadow: inset 0 0 0 1px #f0b8ac; }
  .min { width: 19px; height: 7px; margin-top: 10px; border: 1px solid #98a4b0; background: #d0dae4; }
  .max { width: 18px; height: 16px; border: 2px solid #4a5264; background: #fff; padding: 3px 2px; }
  .max::after { content: ""; display: block; height: 6px; border: 2px solid #4a5264; }

  .client { border: 1px solid #55636f; outline: 2px solid #e6f0f9; background: #f0f0f0; padding: 13px 12px 0 16px; display: grid; grid-template-columns: 1fr 396px; grid-template-rows: 37px auto 56px; column-gap: 11px; }
  .strip, .preset { display: flex; align-items: center; min-width: 0; }
  .raised { width: 44px; }
  .raised .face { border: 2px solid #777; background: linear-gradient(#f6f6f6, #ececec 50%, #d9d9d9 55%, #d2d2d2); box-shadow: inset 0 0 0 1px #fff; }
  .lit .face { border-color: #2f6588; background: linear-gradient(#e2f3fd, #c3e6f9 50%, #8ccaf0 55%, #6db6e0); box-shadow: none; }
  .strip > .tb:first-child { margin-left: -2px; }
  .strip .sep { margin: 0 2px; }
  .swatch { width: 78px; height: 36px; flex: none; background: #fff; border: 2px solid #acacb0; display: flex; justify-content: flex-end; }
  .swatch i { width: 27px; align-self: stretch; border: 2px solid #707070; background: linear-gradient(#f2f2f2 50%, #d6d6d6); display: grid; place-items: center; }
  .swatch i::after { content: ""; border: 6px solid transparent; border-top: 6px solid #000; border-bottom: 0; }
  .preset { gap: 6px; padding: 2px 2px 0 0; }
  .play { width: 33px; height: 33px; border: 2px solid #777; border-radius: 3px; background: linear-gradient(#f6f6f6 50%, #dcdcdc); display: grid; place-items: center; }
  .play i { border: 7px solid transparent; border-left: 8px solid #000; border-right: 0; }
  .left { display: flex; flex-direction: column; padding-top: 10px; min-width: 0; border-bottom: 2px solid #c9c9c9; }
  .preview { flex: 1; border: 3px solid #3f96ec; background: #808080; display: flex; flex-direction: column; justify-content: center; }
  .picture { aspect-ratio: 16 / 9; background: #c32127 repeating-linear-gradient(90deg, #c89c9c 0 12px, #a88 12px 23px) top / 100% 2px no-repeat; }
  .status { display: flex; justify-content: space-between; line-height: 21px; height: 58px; padding-top: 4px; white-space: nowrap; }
  .r { text-align: right; }

  .panel { margin-top: 8px; border: 2px solid #d5dde4; border-radius: 3px; box-shadow: inset 0 0 0 1px #fff; display: flex; padding-left: 9px; }
  .form { width: 349px; padding-bottom: 48px; }
  .row { display: flex; align-items: center; white-space: nowrap; }
  .row > .grow:first-child, .lab { padding-left: 1px; }
  .format { height: 56px; gap: 18px; padding-left: 1px; }
  h2 { display: flex; align-items: center; height: 34px; font: 700 16px/20px "DejaVu Sans", sans-serif; }
  h2 svg { margin: 0 16px 0 7px; }
  h2::after { content: ""; flex: 1; height: 3px; margin: 0 3px 0 8px; background: linear-gradient(#c5c5c5 2px, #fff 2px); }
  .h40 { height: 40px; }
  .h34 { height: 34px; }
  .h32 { height: 32px; }
  .h30 { height: 30px; }
  .h28 { height: 28px; }
  .last { margin-bottom: 4px; }
  .black { padding-left: 119px; color: #7d7d7d; }
  .dis { color: #7d7d7d; }
  .field { display: flex; flex-direction: column; line-height: 28px; }
  .field > :first-child { height: 28px; padding-left: 1px; }
  .field > .sel, .field .swatch { height: 34px; line-height: 20px; }
  .halo { width: 83px; margin: 8px 0 6px auto; }
  .halo .swatch { width: 83px; }
  .pairs { display: grid; grid-template-columns: 246px 1fr; gap: 6px 4px; margin-bottom: 9px; }
  .unit { display: flex; align-items: center; gap: 3px; }
  .unit .spin { width: 78px; }
  .ind { padding-left: 13px; }
  .ind2 { padding-left: 1px; }
  .embed { margin-top: 6px; }
  .profile { height: 22px; padding: 0 8px 0 23px; margin-bottom: 2px; }
  .profile > .grow:first-child { padding-left: 1px; }
  .lab { width: 124px; }
  .sizes { display: flex; }
  .dims { display: grid; grid-template-columns: 118px 98px 78px 20px; grid-auto-rows: 41px; column-gap: 5px; align-items: center; white-space: nowrap; width: 331px; padding-left: 1px; }
  .two { grid-column: span 2; }
  .end { justify-self: end; }
  .bracket { width: 12px; height: 82px; margin: 21px 0 0 2px; border: 2px solid #8c8c8c; border-left: 0; background: linear-gradient(#8c8c8c, #8c8c8c) right center / 8px 1px no-repeat; }
  .res { display: flex; align-items: center; justify-content: space-between; height: 33px; padding: 0 7px 0 7px; border: 1px solid #9cc0de; border-top: 2px solid #4a7ea8; background: #fff; }
  .res input { width: 30px; height: 21px; text-align: center; background: #3399ff; color: #fff; }
  .res::after { content: ""; border: 6px solid transparent; border-top: 6px solid #000; border-bottom: 0; }
  .keep { margin-top: 2px; }
  input[type="checkbox"] { appearance: none; width: 20px; height: 20px; flex: none; margin-right: 4px; border: 2px solid #8c8e90; background: linear-gradient(135deg, #d0d3d8, #fbfbfb); box-shadow: inset 0 0 0 2px #f4f4f4; display: grid; place-items: center; }
  input[type="checkbox"]:disabled { border-color: #b6b6b6; background: #f8f8f8; }
  input[type="checkbox"]:checked::after { content: ""; width: 5px; height: 11px; margin-bottom: 3px; border: solid #42549a; border-width: 0 3px 3px 0; transform: rotate(38deg); }
  input[type="checkbox"]:disabled::after { border-color: #b4b4b4; }
  input[type="radio"] { appearance: none; width: 19px; height: 19px; flex: none; margin-right: 4px; border: 2px solid #8c8e90; border-radius: 50%; background: radial-gradient(circle, #e4e6e8 0 5px, #fafafa 6px); }
  input[type="radio"]:checked { background: radial-gradient(circle at 45% 40%, #4cc0e8 0, #17608c 4px, #0e3a58 5px, #fafafa 6px); }
  .scroll { width: 26px; margin: 4px 4px 4px auto; border-left: 2px solid #e2e2e2; border-right: 1px solid #e2e2e2; display: flex; flex-direction: column; justify-content: space-between; align-items: center; padding: 10px 0; }
  .tri { border: 5px solid transparent; border-bottom: 6px solid #8a8a8a; border-top: 0; }
  .tri.down { border-top: 6px solid #8a8a8a; border-bottom: 0; }

  footer { grid-column: 1 / 3; display: flex; align-items: center; padding-right: 2px; white-space: nowrap; position: relative; }
  .c { width: 62px; margin-left: -4px; }
  .m { width: 181px; }
  .f1 { width: 88px; }
  .f2 { width: 119px; }
  .w250 { margin-left: 14px; }
  .actions { display: flex; gap: 12px; margin-left: 160px; }
  .push { width: 114px; height: 33px; border: 2px solid #707070; border-radius: 4px; background: linear-gradient(#f4f4f4, #ececec 48%, #dcdcdc 50%, #cfcfcf); box-shadow: inset 0 0 0 1px #fafafa; }
  .ok { border-color: #3c7fb1; background: linear-gradient(#f0f6fa, #e2ebf0 48%, #cdd9e0 50%, #c4d2da); box-shadow: inset 0 0 0 2px #52cdf2; }
  .size { position: absolute; right: -8px; bottom: 3px; }
  .ring { position: absolute; pointer-events: none; }
  .ring1 { left: 0; top: 974px; width: 308px; height: 116px; }
  .ring2 { right: 59px; top: 612px; width: 373px; height: 103px; }
</style>
